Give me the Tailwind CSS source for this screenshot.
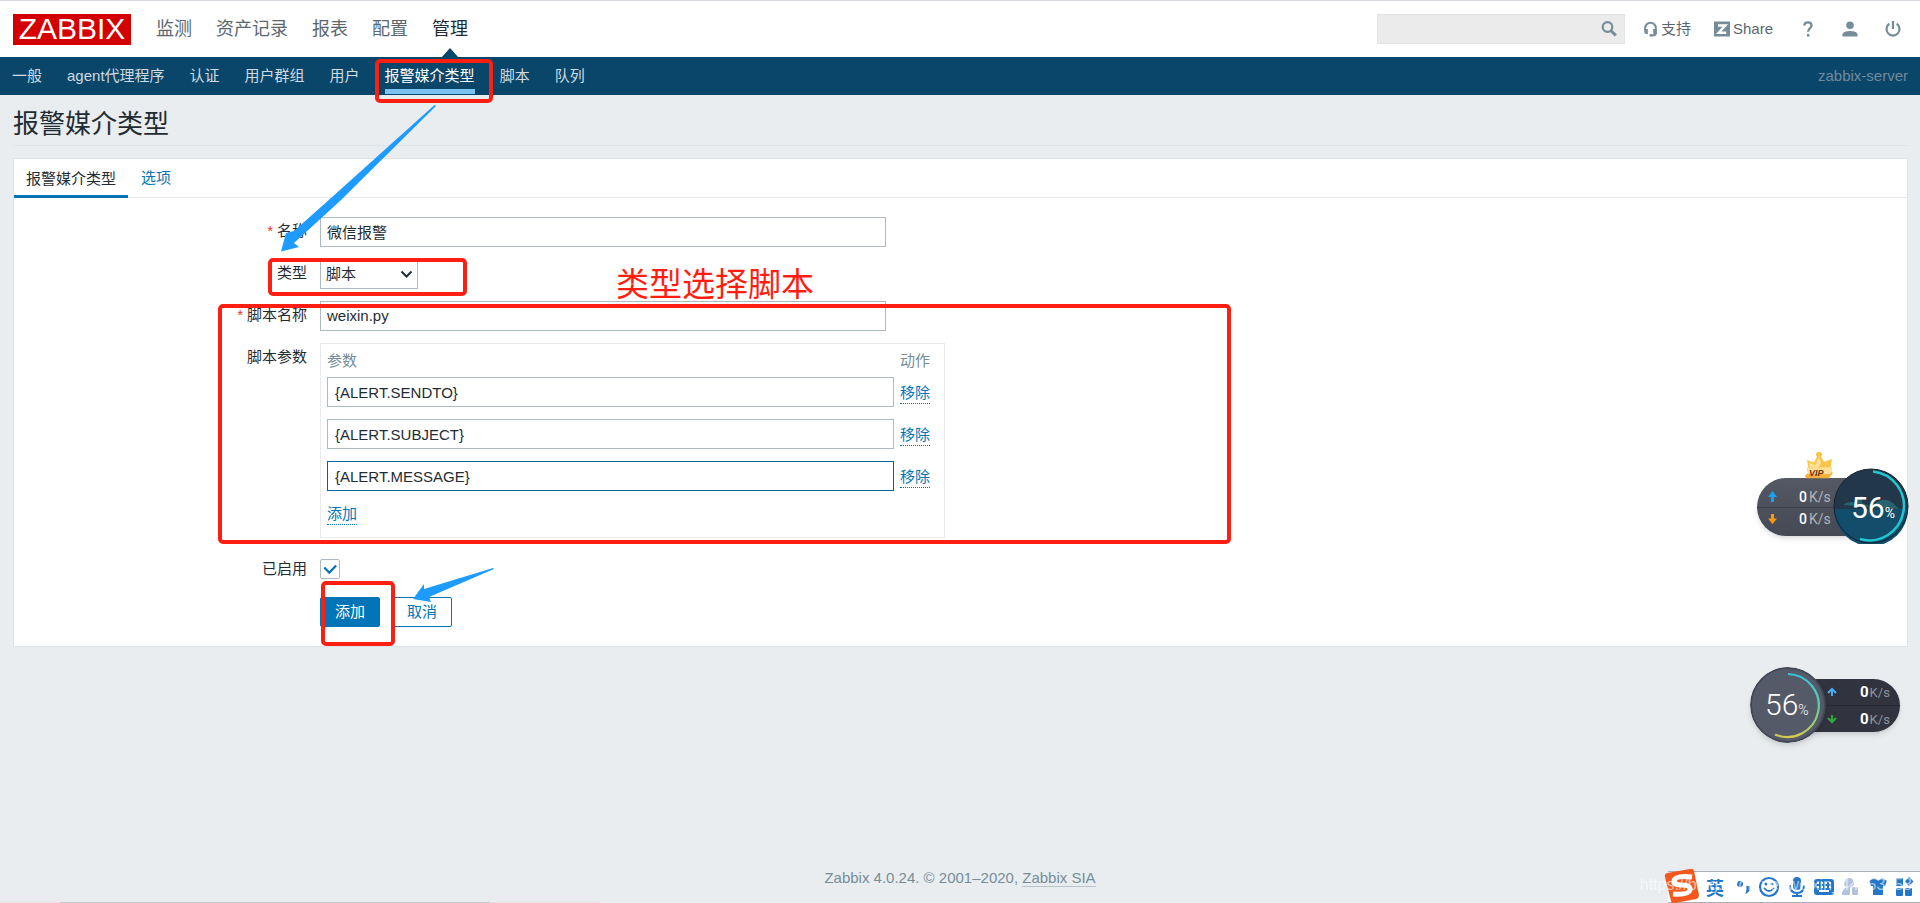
<!DOCTYPE html>
<html lang="zh-CN">
<head>
<meta charset="utf-8">
<title>报警媒介类型</title>
<script src="https://cdn.jsdelivr.net/npm/@tailwindcss/browser@4"></script>
</head>
<body class="bg-[#e9edf0]">
<div class="relative flex min-h-screen flex-col overflow-hidden bg-[#e9edf0] font-['Liberation_Sans','Noto_Sans_CJK_SC',sans-serif] text-[15px] leading-5 text-[#1f2c33]">

  <header>
    <div class="flex h-[57px] items-center border-t border-[#d8d9de] bg-white px-[13px]">
      <a href="#" class="flex h-[31px] w-[118px] items-center justify-center bg-[#d40000] text-[30px] leading-[30px] text-white">ZABBIX</a>
      <nav class="ml-[25px] flex gap-6 text-[18px] leading-6 text-[#5b676f]">
        <a href="#">监测</a>
        <a href="#">资产记录</a>
        <a href="#">报表</a>
        <a href="#">配置</a>
        <a href="#" class="relative text-[#1f2c33]">管理
          <svg class="absolute top-[31px] left-1/2 -ml-[9px] h-[10px] w-[18px]" viewBox="0 0 18 10"><path d="M9 0l9 10H0z" fill="#0a466a"/></svg>
        </a>
      </nav>
      <div class="ml-auto flex items-center text-[#5b676f]">
        <form class="flex h-[30px] w-[248px] items-center border border-[#dfe4e7] bg-[#ebebeb]">
          <input type="text" aria-label="搜索" class="h-full min-w-0 flex-1 bg-transparent px-2 outline-none">
          <button type="button" aria-label="搜索" class="mr-[7px]"><svg class="size-4" viewBox="0 0 16 16" fill="none" stroke="#768d99"><circle cx="6.5" cy="6" r="4.8" stroke-width="2.200"/><path d="M9.800 9.500l5 5" stroke-width="3"/></svg></button>
        </form>
        <a href="#" class="ml-[18px] flex items-center gap-[3px]"><svg class="h-4 w-[15px]" viewBox="0 0 15 16"><path d="M2.200 9V7a5.300 5.300 0 0 1 10.600 0v5.200q0 2-2 2H8" fill="none" stroke="#768d99" stroke-width="2"/><path d="M1.300 8h3.500v5H3.300q-2 0-2-2zM10.200 8h3.500v5h-3.500zM6.500 13.200h3v2.300h-3z" fill="#768d99"/></svg>支持</a>
        <a href="#" class="ml-[23px] flex items-center gap-[3px]"><svg class="size-4" viewBox="0 0 16 16"><rect y=".5" width="16" height="15" fill="#768d99"/><path d="M4 4.500h7.300L4.600 11.800h7.600" fill="none" stroke="#fff" stroke-width="2.400"/></svg>Share</a>
        <a href="#" aria-label="帮助" class="ml-[30px]"><svg class="h-4 w-[10px]" viewBox="0 0 10 16"><path d="M1.200 4.600Q1.400 1.300 5 1.300t3.600 3.200c0 2.600-3.500 2.800-3.500 6.200" fill="none" stroke="#768d99" stroke-width="2.200"/><rect x="4" y="13" width="2.400" height="2.600" fill="#768d99"/></svg></a>
        <a href="#" aria-label="用户资料" class="ml-[29px]"><svg class="size-4" viewBox="0 0 16 16" fill="#768d99"><circle cx="8" cy="4.200" r="3.800"/><path d="M.5 15.500v-2.300Q1.500 10 8 10t7.500 3.200v2.300z"/></svg></a>
        <a href="#" aria-label="退出" class="mr-[6px] ml-[27px]"><svg class="size-4" viewBox="0 0 16 16" fill="none" stroke="#768d99" stroke-width="2.200"><path d="M8 0v8M4.300 2.700a6.500 6.500 0 1 0 7.400 0"/></svg></a>
      </div>
    </div>
    <div class="flex h-[38px] items-center bg-[#0a466a] px-3 text-[#d0dbe1]">
      <nav class="flex h-full items-center gap-[25px] leading-[38px]">
        <a href="#">一般</a>
        <a href="#">agent代理程序</a>
        <a href="#">认证</a>
        <a href="#">用户群组</a>
        <a href="#">用户</a>
        <a href="#" class="relative text-white">报警媒介类型<span class="absolute bottom-px left-0 h-[5px] w-full bg-[#7dc3f2]"></span></a>
        <a href="#">脚本</a>
        <a href="#">队列</a>
      </nav>
      <span class="ml-auto text-[#708b9b]">zabbix-server</span>
    </div>
  </header>

  <main class="pr-3 pl-[13px]">
    <h1 class="border-b border-[#dfe4e7] pt-[14px] pb-[5px] text-[26px] leading-[31px]">报警媒介类型</h1>
    <section class="mt-3 border border-[#dfe4e7] bg-white">
      <div role="tablist" class="flex h-[39px] border-b border-[#e5e9ec]">
        <button role="tab" aria-selected="true" class="h-[39px] border-b-3 border-[#0275b8] px-3 pt-[3px]">报警媒介类型</button>
        <button role="tab" aria-selected="false" class="px-[13px] text-[#0275b8]">选项</button>
      </div>
      <form class="grid grid-cols-[293px_minmax(0,1fr)] gap-x-[13px] gap-y-3 pt-[19px] pb-[19px]">
        <label for="name" class="pt-1 text-right"><span class="mr-1 text-[#e33734]">*</span>名称</label>
        <input id="name" type="text" value="微信报警" class="h-[30px] w-[566px] border border-[#acbbc2] px-1.5 pb-0.5 outline-none">

        <label for="type" class="pt-1 text-right">类型</label>
        <div class="relative w-[98px]">
          <select id="type" class="h-[30px] w-full appearance-none border border-[#acbbc2] bg-white px-[5px]"><option>脚本</option></select>
          <svg class="pointer-events-none absolute top-[11px] right-[5px] h-[9px] w-[13px]" viewBox="0 0 13 9"><path d="M1.500 1.500l5 5 5-5" fill="none" stroke="#1f2c33" stroke-width="2"/></svg>
        </div>

        <label for="script" class="pt-1 text-right"><span class="mr-1 text-[#e33734]">*</span>脚本名称</label>
        <input id="script" type="text" value="weixin.py" class="h-[30px] w-[566px] border border-[#acbbc2] px-1.5 pb-0.5 outline-none">

        <div class="pt-1 text-right">脚本参数</div>
        <div class="w-[625px] border border-[#e8ecee] px-1.5 pb-3">
          <table class="border-collapse text-left">
            <thead><tr class="h-[33px] text-[#768d99]"><th class="font-normal">参数</th><th class="pl-1.5 font-normal">动作</th></tr></thead>
            <tbody>
              <tr class="align-top"><td class="pb-3"><input type="text" aria-label="参数 1" value="{ALERT.SENDTO}" class="block h-[30px] w-[567px] border border-[#acbbc2] px-[7px] outline-none"></td><td class="pt-1.5 pl-1.5"><button type="button" class="block border-b border-dotted border-[#0275b8] text-[#0275b8]">移除</button></td></tr>
              <tr class="align-top"><td class="pb-3"><input type="text" aria-label="参数 2" value="{ALERT.SUBJECT}" class="block h-[30px] w-[567px] border border-[#acbbc2] px-[7px] outline-none"></td><td class="pt-1.5 pl-1.5"><button type="button" class="block border-b border-dotted border-[#0275b8] text-[#0275b8]">移除</button></td></tr>
              <tr class="align-top"><td class="pb-3"><input type="text" aria-label="参数 3" value="{ALERT.MESSAGE}" class="block h-[30px] w-[567px] border border-[#00659c] px-[7px] outline-none"></td><td class="pt-1.5 pl-1.5"><button type="button" class="block border-b border-dotted border-[#0275b8] text-[#0275b8]">移除</button></td></tr>
              <tr><td colspan="2" class="pt-px"><button type="button" class="block border-b border-dotted border-[#0275b8] text-[#0275b8]">添加</button></td></tr>
            </tbody>
          </table>
        </div>

        <label for="enabled" class="pt-[9px] text-right">已启用</label>
        <div class="relative h-[35px] pt-[9px]">
          <input id="enabled" type="checkbox" checked class="block size-5 appearance-none rounded-xs border border-[#acbbc2] bg-white">
          <svg class="pointer-events-none absolute top-[9px] left-0 size-5" viewBox="0 0 20 20"><path d="M4.300 8.500l5 5.200 6.800-7.200" fill="none" stroke="#0275b8" stroke-width="2.300"/></svg>
        </div>

        <div class="col-start-2 flex gap-3">
          <button type="button" class="h-[30px] rounded-xs border border-[#0275b8] bg-[#0275b8] px-3.5 text-white">添加</button>
          <button type="button" class="h-[30px] rounded-xs border border-[#0275b8] bg-white px-3.5 text-[#0275b8]">取消</button>
        </div>
      </form>
    </section>
  </main>

  <footer class="mt-auto pb-[14px] text-center text-[#768d99]">Zabbix 4.0.24. © 2001–2020, <a href="#" class="border-b border-[#b5c3cb]">Zabbix SIA</a></footer>
  <div class="flex h-px bg-[#eef0f2]"><div class="w-[60px] bg-[#f6dde5]"></div><div class="w-[430px] bg-[#c6cacd]"></div><div class="w-[110px] bg-[#f6dde5]"></div></div>

  <!-- Annotation marks -->
  <svg class="pointer-events-none absolute top-0 left-0 h-[700px] w-[1300px]" viewBox="0 0 1300 700">
    <g fill="none" stroke="#ff1f12" stroke-width="4">
      <rect x="377" y="61" width="114" height="40" rx="3"/>
      <rect x="270" y="260" width="195" height="34" rx="3"/>
      <rect x="220" y="306" width="1009" height="236" rx="3"/>
      <rect x="323" y="583" width="70" height="61" rx="3"/>
    </g>
    <g fill="#1e9bff">
      <path d="M434.500 105L331 198L294 231L286 233L281 251.500L299 247L294 243L340 201L436 106z"/>
      <path d="M493 568L424 589V584L413 599L431 602L429 597L494 569z"/>
    </g>
  </svg>
  <div class="absolute top-[265px] left-[616px] text-[33px] leading-10 text-[#ff1f12]">类型选择脚本</div>

  <!-- Network speed widget with VIP badge -->
  <div class="absolute top-[450px] right-[12px] h-[94px] w-[152px]">
    <div class="absolute top-[28px] left-[1px] h-[58px] w-[110px] rounded-l-full bg-linear-to-b from-[#555965] to-[#454954] shadow-md">
      <div class="mt-[29px] border-t border-[#3b3f49]"></div>
    </div>
    <svg class="absolute top-[2px] left-[46px] h-[28px] w-[34px]" viewBox="0 0 34 32" preserveAspectRatio="none"><path d="M7 22L5 9l7 3 3-7a3 3 0 1 1 4 0l3 6 8-3-2 14z" fill="#fbc54a"/><path d="M8 20l-1-8 6 3 4-9 2 6-3 8z" fill="#ffe39a"/><path d="M5 18l25-1-1 5 2 2-4 6H4l-1-3 3-3z" fill="#f6b03c"/><path d="M5 18l25-1-1 8H6z" fill="#ffdf95"/></svg>
    <span class="absolute top-[19px] left-[53px] text-[9px] leading-[9px] font-bold text-[#6b2f08] italic">VIP</span>
    <svg class="absolute top-[40px] left-[11px] h-[44px] w-[11px]" viewBox="0 0 11 44"><path d="M5.500 1L10 7H7v5H4V7H1z" fill="#18a2f2"/><path d="M5.500 34L1 28.500h3V24h3v4.500h3z" fill="#fb9a0c"/></svg>
    <div class="absolute top-[36px] left-[43px] font-['Roboto',sans-serif] text-[14px] leading-[22px] text-[#aeb2bb]"><div class="flex gap-0.5"><b class="font-medium text-white">0</b>K/s</div><div class="flex gap-0.5"><b class="font-medium text-white">0</b>K/s</div></div>
    <svg class="absolute top-[18px] left-[77px] size-[76px]" viewBox="0 0 76 76"><circle cx="38" cy="38" r="37" fill="#22384a"/><path d="M10 37q6-5 13-2l6-8v8l9 4q12-12 22-4l6 6z" fill="#27636f"/><path d="M1 41h74a37 37 0 0 1-74 0z" fill="#124e6b"/><circle cx="38" cy="38" r="37" fill="none" stroke="#17242f"/><path d="M40 3.500A34.500 34.500 0 1 1 27 71" fill="none" stroke="#22c6cf" stroke-width="2.500"/></svg>
    <div class="absolute top-[43px] left-[95px] font-['Roboto',sans-serif] text-[30px] leading-[30px] text-white">56<span class="text-[14px]">%</span></div>
  </div>

  <!-- Network speed widget -->
  <div class="absolute top-[667px] right-[20px] h-[76px] w-[150px]">
    <div class="absolute top-[12px] right-0 h-[53px] w-[100px] rounded-r-full bg-[#31343f] shadow-md">
      <div class="mt-[26px] border-t border-[#262932]"></div>
    </div>
    <svg class="absolute top-0 left-0 size-[76px] rounded-full shadow-md" viewBox="0 0 76 76"><defs><linearGradient id="ring" x1="0" y1="0" x2="0" y2="1"><stop offset="0" stop-color="#35c5d4"/><stop offset=".5" stop-color="#5bd0a4"/><stop offset="1" stop-color="#d3cc4d"/></linearGradient></defs><circle cx="38" cy="38" r="37" fill="#555a69" stroke="#434755" stroke-width="2"/><path d="M38 7A31.500 31.500 0 1 1 25 67.500" fill="none" stroke="url(#ring)" stroke-width="2.200"/></svg>
    <div class="absolute top-[23px] left-[15px] font-['Roboto',sans-serif] text-[30px] leading-[30px] font-light text-white">56<span class="text-[14px]">%</span></div>
    <svg class="absolute top-[20px] left-[77px] h-[38px] w-[10px]" viewBox="0 0 10 38" fill="none" stroke-width="2"><path d="M5 9V2M1 6l4-4 4 4" stroke="#4aabf0"/><path d="M5 28v7M1 31l4 4 4-4" stroke="#2fab3e"/></svg>
    <div class="absolute top-[12px] left-[110px] font-['Roboto',sans-serif] text-[13px] leading-[27px] text-[#8e929d]"><div class="flex gap-px"><b class="text-[15px] text-white">0</b>K/s</div><div class="flex gap-px"><b class="text-[15px] text-white">0</b>K/s</div></div>
  </div>

  <!-- Input method bar -->
  <div class="absolute right-0 bottom-0 flex h-[32px] w-[252px] items-center border-y border-[#a9b0b8] bg-white pl-[38px]">
    <svg class="absolute -top-[4px] -left-[5px] h-[36px] w-[38px]" viewBox="0 0 38 36"><path d="M2 9Q1 6 4 5L27 1q3-1 4 2l5 24q0 3-3 4L12 35q-3 1-4-2z" fill="#f4581f"/><path d="M29 9Q12 7 11 13q-1 4 8 4t8 5q-1 5-17 4" fill="none" stroke="#fff" stroke-width="5"/></svg>
    <span class="w-[21px] font-['Noto_Sans_CJK_SC',sans-serif] text-[18px] leading-6 font-bold text-[#2277c8]">英</span>
    <svg class="h-6 w-[193px]" viewBox="0 0 193 24" fill="#2277c8"><circle cx="13" cy="9" r="3"/><path d="M19 11h4q1 6-5 8 2-3 1-8z"/><circle cx="42" cy="12" r="9" fill="none" stroke="#2277c8" stroke-width="2.200"/><circle cx="39" cy="9" r="1.500"/><circle cx="45" cy="9" r="1.500"/><path d="M37 13q5 6 10 0" fill="none" stroke="#2277c8" stroke-width="1.800"/><rect x="66" y="2" width="8" height="13" rx="4"/><path d="M63 10q0 8 7 8t7-8M70 18v4M65 21h10" fill="none" stroke="#2277c8" stroke-width="2"/><rect x="87" y="4" width="20" height="16" rx="3"/><path d="M90 8h2M94 8h2M98 8h2M102 8h2M90 12h2M94 12h2M98 12h2M102 12h2M92 16h10" stroke="#fff" stroke-width="1.800"/><g fill="#b3c3dc"><circle cx="122" cy="8" r="5"/><path d="M115 20q0-8 8-8v8z"/><rect x="125" y="12" width="6" height="8" rx="1"/></g><path d="M142 6l5-3q4 4 8 0l5 3-2 5h-2v9h-10v-9h-2z"/><rect x="169" y="3" width="7" height="8" rx="1"/><rect x="169" y="13" width="7" height="8" rx="1"/><rect x="178" y="13" width="7" height="8" rx="1"/><path d="M182 2l4.500 4.500L182 11l-4.500-4.500z"/></svg>
  </div>
  <div class="pointer-events-none absolute right-[8px] bottom-[8px] text-[16px] leading-5 text-white/60">https://blog.csdn.net/weixin_44953658</div>
</div>
</body>
</html>
